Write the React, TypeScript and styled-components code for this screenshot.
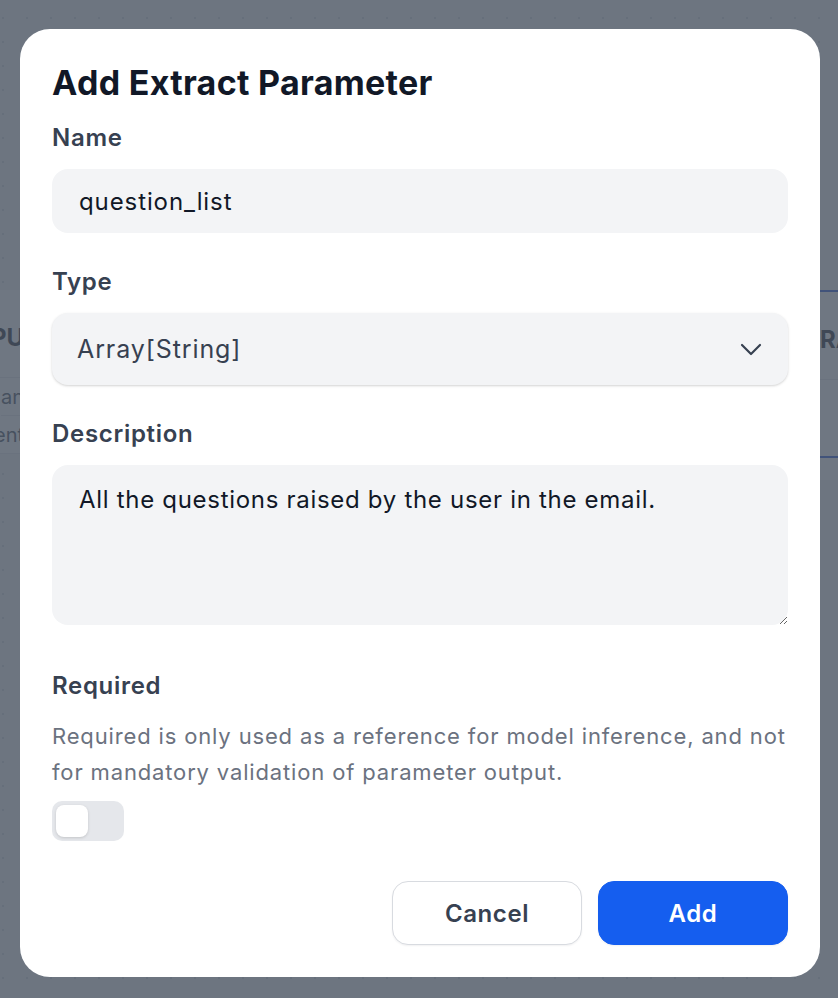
import React, { useState } from 'react'
import styled, { createGlobalStyle } from 'styled-components'

//Global
const GlobalStyle = createGlobalStyle`
    * { box-sizing: border-box; }
    html, body {
        margin: 0;
        padding: 0;
        font-family: Inter, "Noto Sans", "Liberation Sans", sans-serif;
        -webkit-font-smoothing: antialiased;
    }
`;

//Page behind the dialog
const Page = styled.div`
    width: 838px;
    height: 998px;
    overflow: hidden;
    background-color: #f3f4f6;
    background-image: radial-gradient(circle, #d1d5db 1.2px, transparent 1.4px);
    background-size: 24px 24px;
    background-position: -9px 6px;
    display: flex;
    justify-content: space-between;
    align-items: flex-start;
    padding-top: 290px;
`;

const SidePanel = styled.div<{ $side: 'left' | 'right' }>`
    width: ${p => (p.$side === 'left' ? '24px' : '18px')};
    overflow: hidden;
    background: #fff;
    display: flex;
    flex-direction: column;
    align-items: ${p => (p.$side === 'left' ? 'flex-end' : 'flex-start')};
    border-top: ${p => (p.$side === 'right' ? '2px solid #1d4ed8' : 'none')};
`;

const PanelHead = styled.div`
    height: 88px;
    padding-top: 8px;
    display: flex;
    align-items: center;
    font-size: 24px;
    font-weight: 700;
    color: #111827;
    white-space: nowrap;
    border-bottom: 1px solid #e5e7eb;
`;

const PanelRow = styled.div<{ $shade?: boolean }>`
    height: 38px;
    display: flex;
    align-items: center;
    font-size: 20px;
    color: #374151;
    white-space: nowrap;
    background: ${p => (p.$shade ? '#f3f4f6' : '#fff')};
    border-bottom: 1px solid #e5e7eb;
`;

const PanelFoot = styled.div`
    height: 24px;
    width: 100%;
    border-top: 2px solid #1d4ed8;
`;

//Dialog
const Overlay = styled.div`
    position: fixed;
    inset: 0;
    background: rgba(75, 85, 99, 0.8);
    padding: 29px 0 0 20px;
`;

const Dialog = styled.div`
    width: 800px;
    background: #fff;
    border-radius: 30px;
    padding: 32px;
    display: flex;
    flex-direction: column;
`;

const Title = styled.h2`
    margin: 0 0 17px;
    font-size: 34px;
    line-height: 44px;
    font-weight: 700;
    color: #111827;
    letter-spacing: 0.3px;
`;

const Field = styled.div<{ $gap?: number }>`
    display: flex;
    flex-direction: column;
    margin-top: ${p => p.$gap ?? 0}px;
`;

const Label = styled.label`
    font-size: 24px;
    line-height: 32px;
    font-weight: 600;
    color: #374151;
    letter-spacing: 0.7px;
    margin-bottom: 15px;
`;

const TextInput = styled.input`
    height: 64px;
    border: none;
    outline: none;
    border-radius: 16px;
    background: #f3f4f6;
    padding: 0 27px;
    font-family: inherit;
    font-size: 24px;
    letter-spacing: 0.9px;
    color: #111827;
`;

const SelectBox = styled.div`
    height: 72px;
    border-radius: 16px;
    background: #f3f4f6;
    box-shadow: 0 1px 3px rgba(0, 0, 0, 0.12), 0 1px 2px rgba(0, 0, 0, 0.06);
    padding: 0 25px;
    display: flex;
    align-items: center;
    justify-content: space-between;
    font-size: 25px;
    letter-spacing: 0.9px;
    color: #374151;
`;

const TextArea = styled.textarea`
    height: 160px;
    border: none;
    outline: none;
    border-radius: 16px;
    background: #f3f4f6;
    padding: 17px 27px;
    font-family: inherit;
    font-size: 24px;
    line-height: 36px;
    letter-spacing: 0.7px;
    color: #111827;
    resize: vertical;
    display: block;
`;

const Help = styled.p`
    margin: 1px 0 0;
    font-size: 22px;
    line-height: 36px;
    letter-spacing: 0.85px;
    color: #6b7280;
`;

const Toggle = styled.button<{ $on: boolean }>`
    margin-top: 11px;
    width: 72px;
    height: 40px;
    border: none;
    border-radius: 10px;
    padding: 4px;
    background: ${p => (p.$on ? '#155eef' : '#e5e7eb')};
    display: flex;
    justify-content: ${p => (p.$on ? 'flex-end' : 'flex-start')};
    cursor: pointer;
`;

const Knob = styled.span`
    width: 32px;
    height: 32px;
    border-radius: 8px;
    background: #fff;
    box-shadow: 0 1px 3px rgba(0, 0, 0, 0.15);
`;

const Actions = styled.div`
    display: flex;
    justify-content: flex-end;
    gap: 16px;
    margin-top: 40px;
`;

const Button = styled.button<{ $primary?: boolean }>`
    width: 190px;
    height: 64px;
    border-radius: 16px;
    font-family: inherit;
    font-size: 24px;
    font-weight: 600;
    letter-spacing: 0.6px;
    cursor: pointer;
    border: 1px solid ${p => (p.$primary ? '#155eef' : '#d8dbe0')};
    background: ${p => (p.$primary ? '#155eef' : '#fff')};
    color: ${p => (p.$primary ? '#fff' : '#374151')};
    box-shadow: 0 1px 2px rgba(16, 24, 40, 0.06);
`;

const Chevron = () => (
    <svg width="24" height="24" viewBox="0 0 24 24" fill="none" stroke="#374151" strokeWidth="2.2" strokeLinecap="round" strokeLinejoin="round">
        <path d="M3 8l9 9 9-9" />
    </svg>
)

const App = () => {
    const [name, setName] = useState('question_list')
    const [desc, setDesc] = useState('All the questions raised by the user in the email.')
    const [required, setRequired] = useState(false)

    return (
        <>
            <GlobalStyle />
            <Page>
                <SidePanel $side="left">
                    <PanelHead>INPU</PanelHead>
                    <PanelRow>an</PanelRow>
                    <PanelRow>ent</PanelRow>
                </SidePanel>
                <SidePanel $side="right">
                    <PanelHead>RA</PanelHead>
                    <PanelRow $shade />
                    <PanelRow />
                    <PanelFoot />
                </SidePanel>
            </Page>
            <Overlay>
                <Dialog>
                    <Title>Add Extract Parameter</Title>
                    <Field>
                        <Label>Name</Label>
                        <TextInput value={name} onChange={e => setName(e.target.value)} />
                    </Field>
                    <Field $gap={33}>
                        <Label>Type</Label>
                        <SelectBox>
                            <span>Array[String]</span>
                            <Chevron />
                        </SelectBox>
                    </Field>
                    <Field $gap={33}>
                        <Label>Description</Label>
                        <TextArea value={desc} onChange={e => setDesc(e.target.value)} />
                    </Field>
                    <Field $gap={45}>
                        <Label>Required</Label>
                        <Help>
                            Required is only used as a reference for model inference, and not for mandatory validation of parameter output.
                        </Help>
                        <Toggle $on={required} onClick={() => setRequired(!required)}>
                            <Knob />
                        </Toggle>
                    </Field>
                    <Actions>
                        <Button>Cancel</Button>
                        <Button $primary>Add</Button>
                    </Actions>
                </Dialog>
            </Overlay>
        </>
    )
}

export default App;
